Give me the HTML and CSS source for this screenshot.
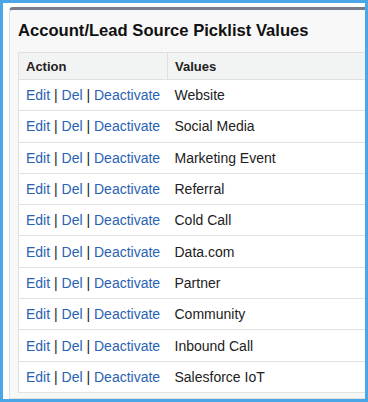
FILE: index.html
```html
<!DOCTYPE html>
<html>
<head>
<meta charset="utf-8">
<link rel="stylesheet" href="styles.css">
</head>
<body>
<div class="frame">
  <div class="panel">
    <h2 class="title">Account/Lead Source Picklist Values</h2>
    <table class="list">
      <thead>
        <tr><th class="col-action">Action</th><th class="col-values">Values</th></tr>
      </thead>
      <tbody>
        <tr><td class="actions"><a href="#">Edit</a> | <a href="#">Del</a> | <a href="#">Deactivate</a></td><td>Website</td></tr>
        <tr><td class="actions"><a href="#">Edit</a> | <a href="#">Del</a> | <a href="#">Deactivate</a></td><td>Social Media</td></tr>
        <tr><td class="actions"><a href="#">Edit</a> | <a href="#">Del</a> | <a href="#">Deactivate</a></td><td>Marketing Event</td></tr>
        <tr><td class="actions"><a href="#">Edit</a> | <a href="#">Del</a> | <a href="#">Deactivate</a></td><td>Referral</td></tr>
        <tr><td class="actions"><a href="#">Edit</a> | <a href="#">Del</a> | <a href="#">Deactivate</a></td><td>Cold Call</td></tr>
        <tr><td class="actions"><a href="#">Edit</a> | <a href="#">Del</a> | <a href="#">Deactivate</a></td><td>Data.com</td></tr>
        <tr><td class="actions"><a href="#">Edit</a> | <a href="#">Del</a> | <a href="#">Deactivate</a></td><td>Partner</td></tr>
        <tr><td class="actions"><a href="#">Edit</a> | <a href="#">Del</a> | <a href="#">Deactivate</a></td><td>Community</td></tr>
        <tr><td class="actions"><a href="#">Edit</a> | <a href="#">Del</a> | <a href="#">Deactivate</a></td><td>Inbound Call</td></tr>
        <tr><td class="actions"><a href="#">Edit</a> | <a href="#">Del</a> | <a href="#">Deactivate</a></td><td>Salesforce IoT</td></tr>
      </tbody>
    </table>
  </div>
</div>
</body>
</html>
```
FILE: styles.css
```css
html, body {
  margin: 0;
  padding: 0;
  background: #ffffff;
}
.frame {
  width: 368px;
  height: 402px;
  box-sizing: border-box;
  border: 3px solid #4aa6e6;
  padding: 4px 0 0 6px;
  overflow: hidden;
  background: #ffffff;
  font-family: "Liberation Sans", Arial, sans-serif;
}
.panel {
  width: 420px;
  height: 392px;
  box-sizing: border-box;
  background: #f8f8f8;
  border: 1px solid #e0e0e0;
  border-top: 3px solid #777c8c;
  border-radius: 4px 0 0 0;
  padding: 0 0 0 8px;
}
.title {
  margin: 0;
  padding: 11px 0 11px 0;
  font-size: 16.6px;
  font-weight: bold;
  color: #111111;
  line-height: 20px;
}
.list {
  border-collapse: collapse;
  width: 420px;
  background: #ffffff;
  border: 1px solid #e0e0e0;
  font-size: 14px;
}
.list th {
  background: #f2f3f3;
  text-align: left;
  font-size: 13px;
  font-weight: bold;
  color: #222222;
  height: 26px;
  padding: 0 7px;
  border-bottom: 1px solid #e0e0e0;
}
.col-action {
  width: 134px;
  border-right: 1px solid #e0e0e0;
}
.list td {
  height: 30.3px;
  padding: 0 7px;
  border-bottom: 1px solid #e3e3e3;
  color: #222222;
  white-space: nowrap;
}
.actions {
  color: #9a9a9a;
}
.actions a {
  color: #2a62b3;
  text-decoration: none;
}
```
